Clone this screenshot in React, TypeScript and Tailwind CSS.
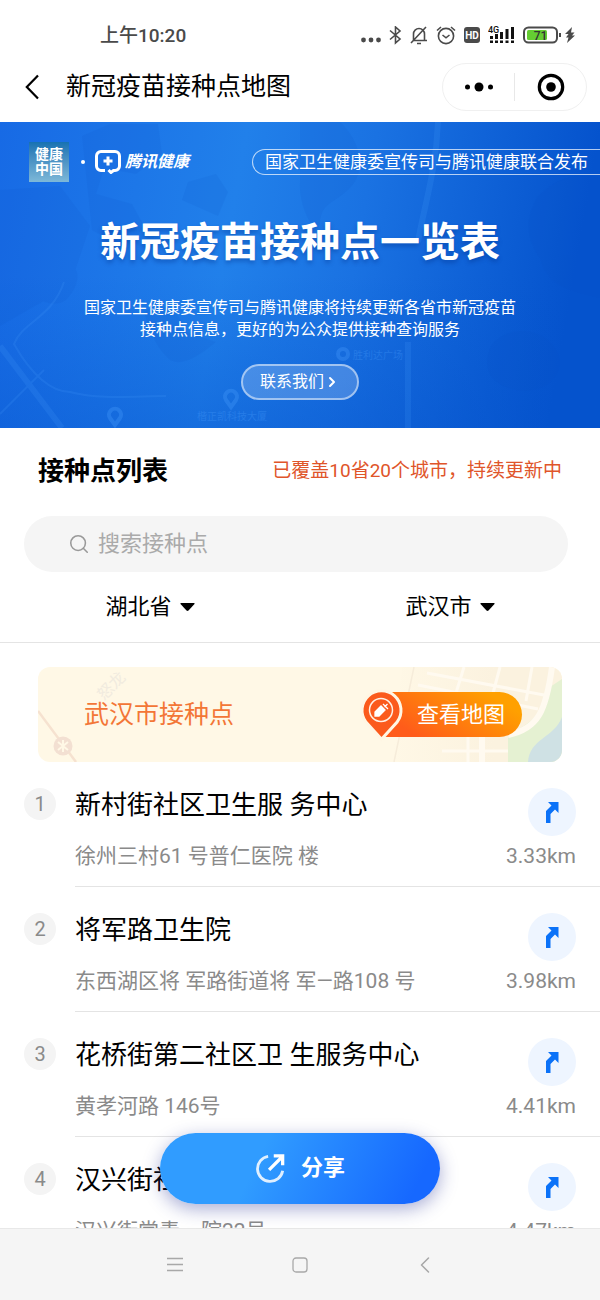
import { ChevronLeft, ChevronRight, Search } from 'lucide-react';

const sites = [
  { name: '新村街社区卫生服 务中心', address: '徐州三村61 号普仁医院 楼', distance: '3.33km' },
  { name: '将军路卫生院', address: '东西湖区将 军路街道将 军—路108 号', distance: '3.98km' },
  { name: '花桥街第二社区卫 生服务中心', address: '黄孝河路 146号', distance: '4.41km' },
  { name: '汉兴街社区卫生服务中心', address: '汉兴街常青一院22号', distance: '4.47km' },
];

const StatusBar = () => (
  <div className="flex h-[51px] items-center justify-between pt-5 pl-[100px] pr-[25px] text-[#4a4a4a]">
    <span className="text-[19px] leading-6 font-medium">上午10:20</span>
    <div className="flex items-center gap-2" aria-hidden="true">
      <svg width="20" height="20" viewBox="0 0 20 20" fill="currentColor">
        <circle cx="2.5" cy="14" r="2.4" />
        <circle cx="10" cy="14" r="2.4" />
        <circle cx="17.5" cy="14" r="2.4" />
      </svg>
      <svg width="13" height="20" viewBox="0 0 13 20" fill="none" stroke="currentColor" strokeWidth="1.6">
        <path d="M1 4.500 11 13 6.500 17V1L11 5 1 13.500" />
      </svg>
      <svg width="18" height="20" viewBox="0 0 18 20" fill="none" stroke="currentColor" strokeWidth="1.6">
        <path d="M3 14.500h14M14.500 14.500V8a5.500 5.500 0 0 0-11 0v6M7 17.500h4M16 1 1 17" />
      </svg>
      <svg width="20" height="20" viewBox="0 0 20 20" fill="none" stroke="currentColor" strokeWidth="1.6">
        <circle cx="10" cy="10" r="7.600" />
        <path d="M6.500 9 10 11.800 13.500 9M1 4.500l4-3.500M19 4.500l-4-3.500" />
      </svg>
      <svg width="16" height="20" viewBox="0 0 16 20">
        <rect y="1" width="16" height="16" rx="3" fill="currentColor" />
        <text x="8" y="12.600" fontSize="10" fontWeight="700" textAnchor="middle" fill="#fff">HD</text>
      </svg>
      <svg width="27" height="20" viewBox="0 0 27 20" fill="#111">
        <text x="0" y="6.500" fontSize="9" fontWeight="500">4G</text>
        <path d="M2 10h3v3H2zM7 8h3v5H7zM12 6h3v7h-3zM17.500 3h3v10h-3zM23 1h3v12h-3zM2 14.500h3V17H2zM7 14.500h3V17H7zM12 14.500h3V17h-3zM17.500 14.500h3V17h-3zM23 14.500h3V17h-3z" />
      </svg>
      <div className="flex items-center gap-1">
        <svg width="38" height="20" viewBox="0 0 38 20">
          <rect x="1" y="1.500" width="33" height="15" rx="4.500" fill="#fff" stroke="currentColor" strokeWidth="2" />
          <rect x="4" y="4" width="20" height="10" rx="1.500" fill="#64cc32" />
          <rect x="36" y="7" width="2" height="4" fill="currentColor" />
          <text x="17.500" y="13.500" fontSize="12" fontWeight="500" textAnchor="middle" fill="#333">71</text>
        </svg>
        <svg width="10" height="20" viewBox="0 0 10 20" fill="currentColor">
          <path d="M7 1 0 8h3.500L1 11.500h2.500L2 17l8-7.500H7L9.500 6.500H6z" />
        </svg>
      </div>
    </div>
  </div>
);

const TitleBar = () => (
  <header className="flex h-[71px] items-center pl-4 pr-[13px] text-black">
    <button type="button" aria-label="返回" className="flex w-8 justify-center">
      <svg width="14" height="26" viewBox="0 0 14 26" fill="none" stroke="currentColor" strokeWidth="2.2">
        <path d="M13 1.500 1.800 13 13 24.500" />
      </svg>
    </button>
    <h1 className="ml-[18px] flex-1 text-[25px] leading-9">新冠疫苗接种点地图</h1>
    <div className="flex h-12 w-[145px] items-center rounded-full border border-[#f0f0f0]">
      <button type="button" aria-label="更多" className="flex flex-1 justify-center">
        <svg width="30" height="12" viewBox="0 0 30 12" fill="currentColor">
          <circle cx="3.500" cy="6" r="2.500" />
          <circle cx="15" cy="6" r="4.500" />
          <circle cx="26.500" cy="6" r="2.500" />
        </svg>
      </button>
      <span className="h-7 w-px bg-[#e8e8e8]" />
      <button type="button" aria-label="关闭" className="flex flex-1 justify-center">
        <svg width="28" height="28" viewBox="0 0 28 28">
          <circle cx="14" cy="14" r="11.700" fill="none" stroke="currentColor" strokeWidth="3.200" />
          <circle cx="14" cy="14" r="4.800" fill="currentColor" />
        </svg>
      </button>
    </div>
  </header>
);

const HeroMap = () => (
  <svg
    className="absolute inset-0 h-full w-full"
    viewBox="0 0 600 306"
    preserveAspectRatio="xMidYMid slice"
    aria-hidden="true"
  >
    <g fill="#0a4fc4" opacity="0.1">
      <path d="M82 14 110 2h48l4 30-26 20-32-6-8 26 36 10 12 22-16 24-36-20z" />
      <path d="M188 60l28-8 12 18-10 24-36-16z" />
      <path d="M32 172c10-14 26-22 38-28 14 4 6 24-4 34-12 8-24 2-34-6z" />
      <path d="M144 190c20-14 36 0 42 20l30 10c-24 20-40 26-50 14-12-12-18-30-22-44z" />
      <path d="M300 0h40c22 20 26 50 10 66s-28 14-30 34-22-14-20-40z" />
      <path d="M538 74c20-20 40-22 62-18v120c-30-8-52-10-60-40-16-20-14-44-2-62z" />
      <path d="M492 222c18-20 52-16 64 6s-10 46-40 40-34-26-24-46z" />
      <path d="M0 68l60-4 30 40-20 60-70 40z" />
    </g>
    <g fill="none" stroke="#4ba0ff" opacity="0.16">
      <path d="M0 224 62 306" strokeWidth="6" />
      <path d="M0 292 44 248" strokeWidth="2" />
      <path d="M64 160C52 196 22 200 14 222c18 32 38 48 56 48 30 8 66 4 96 4" strokeWidth="2" />
      <path d="M438 0c-2 50-14 84-20 120M408 220v86" strokeWidth="6" />
    </g>
    <g fill="none" stroke="#4ba0ff" strokeWidth="4" opacity="0.3">
      <path d="M115 303l-5-7a6 6 0 1 1 10 0z" />
      <path d="M231 285l-5-7a6 6 0 1 1 10 0z" />
      <circle cx="343" cy="232" r="5" />
    </g>
    <g fill="#4ba0ff" fontSize="10" opacity="0.3">
      <text x="197" y="298">楷正凯科技大厦</text>
      <text x="353" y="237">胜利达广场</text>
    </g>
  </svg>
);

const Hero = () => (
  <section className="relative bg-[linear-gradient(100deg,#176ae5_0%,#2180ea_38%,#1a72e2_58%,#0553cd_92%)] pt-5 pb-7 text-white">
    <div className="absolute inset-0 bg-linear-to-b from-transparent from-50% to-[#0553cd]/40" />
    <HeroMap />
    <div className="relative">
      <div className="flex items-center pl-[29px]">
        <div className="flex h-10 w-10 flex-col items-center justify-center bg-linear-to-b from-[#1672b2] to-[#7db8d8] text-sm leading-[15px] font-bold">
          <span>健康</span>
          <span>中国</span>
        </div>
        <span className="ml-3 h-1 w-1 rounded-full bg-white" />
        <svg className="ml-2.5" width="26" height="24" viewBox="0 0 26 24" fill="none" stroke="#fff" strokeWidth="3">
          <path d="M10 20.500H6A4.500 4.500 0 0 1 1.500 16V6A4.500 4.500 0 0 1 6 1.500h14A4.500 4.500 0 0 1 24.500 6v10a4.500 4.500 0 0 1-4.500 4.500h-1.500L16 22.500l-2.500-2.500" />
          <path d="M13 6.500v9M8.500 11h9" />
        </svg>
        <span className="ml-1 text-base leading-6 font-bold italic">腾讯健康</span>
        <span className="ml-auto h-[26px] rounded-l-full border border-r-0 border-white/70 px-3 text-[17px] leading-6 whitespace-nowrap">
          国家卫生健康委宣传司与腾讯健康联合发布
        </span>
      </div>
      <h2 className="mt-[34px] text-center text-[40px] leading-[54px] font-bold [text-shadow:0_3px_4px_rgba(0,50,140,0.4)]">
        新冠疫苗接种点一览表
      </h2>
      <p className="mx-auto mt-[27px] max-w-[440px] text-center text-base leading-[22px]">
        国家卫生健康委宣传司与腾讯健康将持续更新各省市新冠疫苗接种点信息，更好的为公众提供接种查询服务
      </p>
      <button
        type="button"
        className="mx-auto mt-[23px] flex h-9 w-[118px] items-center justify-center rounded-full border-2 border-white/50 bg-white/20 text-base"
      >
        联系我们
        <ChevronRight size={16} strokeWidth={3} />
      </button>
    </div>
  </section>
);

const RegionSelect = ({ label, value }: { label: string; value: string }) => (
  <label className="flex flex-1 items-center justify-center gap-2">
    <select
      aria-label={label}
      defaultValue={value}
      className="field-sizing-content appearance-none bg-transparent text-[22px] leading-8 text-black outline-none"
    >
      <option>{value}</option>
    </select>
    <svg width="15" height="8" viewBox="0 0 15 8" aria-hidden="true">
      <path d="M1 0h13q1 0 .5 1L8.500 7.500q-1 .8-2 0L.5 1Q0 0 1 0z" fill="#000" />
    </svg>
  </label>
);

const CityBanner = () => (
  <div className="relative mx-[38px] mt-6 flex h-[95px] items-center justify-between overflow-hidden rounded-xl bg-[#fff8e6] pl-[46px] pr-10">
    <svg className="absolute top-0 left-0 h-full" width="120" viewBox="0 0 120 95" aria-hidden="true">
      <path d="M0 44 38 95" stroke="#f6e2d0" strokeWidth="2.500" />
      <circle cx="25" cy="79" r="9.500" fill="#f3e0d2" />
      <path d="M20 75l10 8M30 75l-10 8M25 73v12" stroke="#fff8e6" strokeWidth="2" />
      <g fill="#f1ebdf" fontSize="16">
        <text transform="translate(66 34) rotate(-45)">怒龙</text>
      </g>
    </svg>
    <svg className="absolute top-0 right-0 h-full" width="190" viewBox="0 0 190 95" aria-hidden="true">
      <defs>
        <linearGradient id="land" x1="0" y1="0" x2="1" y2="0">
          <stop offset="0" stopColor="#fff8e6" />
          <stop offset="0.600" stopColor="#fbf2df" />
        </linearGradient>
      </defs>
      <path d="M30 0h160v95H20z" fill="url(#land)" />
      <path d="M190 12v83h-54V66c18-4 40-24 42-46z" fill="#e5f1d2" />
      <path d="M190 50v45h-34c2-24 26-24 34-45z" fill="#cfe1e4" />
      <g fill="none" stroke="#fffaf0" strokeWidth="3">
        <path d="M55 6 172 28M46 18l120 24M92 0 84 26M128 0l-8 30M96 68v27M70 84h66M160 0l-6 34" />
        <path d="M180 0c-6 44-14 62-44 68M110 70v25" strokeWidth="6" />
      </g>
      <path d="M42 0 22 95" stroke="#f6ecda" strokeWidth="1.500" />
    </svg>
    <h3 className="relative text-[25px] leading-9 text-[#f37636]">武汉市接种点</h3>
    <button
      type="button"
      className="relative flex h-[45px] w-[159px] items-center justify-end pr-[17px] text-[22px] text-white"
    >
      <svg className="absolute inset-0 overflow-visible" width="159" height="45" viewBox="0 0 159 45" aria-hidden="true">
        <defs>
          <linearGradient id="pill" x1="0" y1="1" x2="1" y2="0.500">
            <stop offset="0.200" stopColor="#ff5c1a" />
            <stop offset="1" stopColor="#ffa000" />
          </linearGradient>
        </defs>
        <path d="M26 0h110.500a22.500 22.500 0 0 1 0 45H20z" fill="url(#pill)" />
        <path
          d="M18.500 45 4 29A18 18 0 1 1 33 29z"
          fill="#fb5a1c"
          stroke="#fff6e4"
          strokeWidth="6"
          paintOrder="stroke"
        />
        <circle cx="18" cy="18" r="11.500" fill="none" stroke="#fff0e4" strokeWidth="1.500" />
        <path d="M12 24v-4l6-6 4 4-6 6zM20 12l5 5M21.500 15l3-3" fill="#fff" stroke="#fff" strokeWidth="1.300" />
      </svg>
      <span className="relative">查看地图</span>
    </button>
  </div>
);

const SiteRow = ({ index, name, address, distance }: { index: number; name: string; address: string; distance: string }) => (
  <li className="flex items-start pl-6">
    <span className="mt-[26px] flex h-8 w-8 shrink-0 items-center justify-center rounded-full bg-[#f4f4f4] text-xl text-[#8a8a8a]">
      {index}
    </span>
    <div className="ml-[19px] flex min-w-0 flex-1 items-start border-b border-[#e4e4e4] pt-6 pb-3.5 pr-6">
      <div className="min-w-0 flex-1 whitespace-nowrap">
        <h4 className="text-[26px] leading-[38px] text-black">{name}</h4>
        <p className="mt-4 text-[21px] leading-8 text-[#8a8a8a]">{address}</p>
      </div>
      <div className="flex flex-col items-end pt-0.5">
        <button
          type="button"
          aria-label={`导航到${name}`}
          className="flex h-12 w-12 items-center justify-center rounded-full bg-[#eef5ff]"
        >
          <svg width="14" height="23" viewBox="0 0 14 23" fill="#0b72f8">
            <path d="M1 22V10L6.500 4.500 3 1H13.500V12L10 8.500 5.500 13V22z" />
          </svg>
        </button>
        <span className="mt-1 text-[21px] leading-8 text-[#8a8a8a]">{distance}</span>
      </div>
    </div>
  </li>
);

const BottomNav = () => (
  <nav className="flex h-[72px] shrink-0 items-center justify-center gap-[109px] border-t border-[#e8e8e8] bg-[#f5f5f5] text-[#a8a8a8]">
    <button type="button" aria-label="菜单">
      <svg width="16" height="16" viewBox="0 0 16 16" stroke="currentColor" strokeWidth="1.300">
        <path d="M0 1.500h16M0 7.500h16M0 13.500h16" />
      </svg>
    </button>
    <button type="button" aria-label="主页">
      <svg width="16" height="16" viewBox="0 0 16 16" fill="none" stroke="currentColor" strokeWidth="1.300">
        <rect x="1" y="1" width="14" height="14" rx="3" />
      </svg>
    </button>
    <button type="button" aria-label="后退" className="flex w-4 justify-center">
      <ChevronLeft size={28} strokeWidth={1.3} className="shrink-0" />
    </button>
  </nav>
);

export default function App() {
  return (
    <div className="flex h-screen flex-col bg-white font-[Roboto,'Noto_Sans_CJK_SC',sans-serif]">
      <StatusBar />
      <TitleBar />
      <div className="relative min-h-0 flex-1">
        <main className="h-full overflow-hidden">
          <Hero />

          <div className="flex items-center justify-between px-[38px] pt-[25px] pb-[27px]">
            <h2 className="text-[26px] leading-9 font-bold text-black">接种点列表</h2>
            <p className="text-[19px] leading-9 text-[#e0552a]">已覆盖10省20个城市，持续更新中</p>
          </div>

          <label className="mr-8 ml-6 flex h-14 items-center gap-2 rounded-full bg-[#f5f5f5] pr-6 pl-11">
            <Search size={22} strokeWidth={1.7} className="text-[#999]" />
            <input
              type="text"
              aria-label="搜索接种点"
              placeholder="搜索接种点"
              className="min-w-0 flex-1 bg-transparent text-[22px] leading-8 outline-none placeholder:text-[#aaa]"
            />
          </label>

          <div className="flex h-[71px] items-center border-b border-[#e4e4e4]">
            <RegionSelect label="省份" value="湖北省" />
            <RegionSelect label="城市" value="武汉市" />
          </div>

          <CityBanner />

          <ul>
            {sites.map((site, i) => (
              <SiteRow key={site.name} index={i + 1} {...site} />
            ))}
          </ul>
        </main>

        {/* Floating share button */}
        <button
          type="button"
          className="absolute bottom-6 left-1/2 flex h-[71px] w-[280px] -translate-x-1/2 items-center justify-center gap-4 rounded-full bg-[linear-gradient(115deg,#309cff_35%,#1668ff_90%)] pb-0.5 text-[22px] font-bold text-white shadow-[0_5px_18px_rgba(40,50,150,0.4)]"
        >
          <svg width="30" height="30" viewBox="0 0 32 32" fill="none" stroke="#fff" strokeWidth="3">
            <path d="M14 3.500A13.500 13.500 0 1 0 29.500 19" opacity="0.850" />
            <path d="M15 18 29 4M20 3h9.500v10" strokeWidth="3.500" />
          </svg>
          分享
        </button>
      </div>
      <BottomNav />
    </div>
  );
}
